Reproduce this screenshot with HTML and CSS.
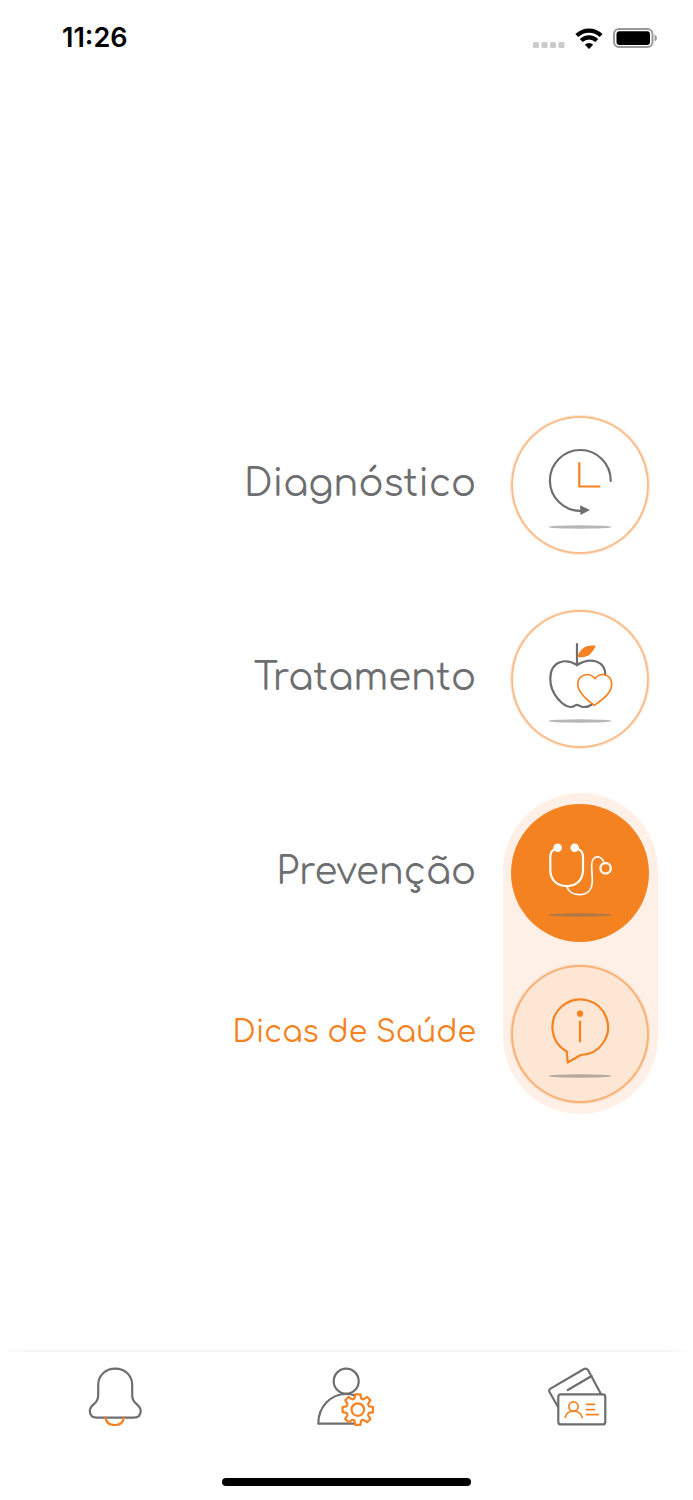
FILE: index.html
```html
<!DOCTYPE html>
<html lang="pt">
<head>
<meta charset="utf-8">
<meta name="viewport" content="width=device-width, initial-scale=1">
<title>Saúde</title>
<link rel="stylesheet" href="styles.css">
</head>
<body>
<div class="screen">
  <header class="status">
    <time class="clock">11:26</time>
    <div class="indicators">
      <svg class="signal" viewBox="0 0 32 6" aria-hidden="true"><rect width="6" height="6" rx="1.5"/><rect x="8.5" width="6" height="6" rx="1.5"/><rect x="17" width="6" height="6" rx="1.5"/><rect x="25.5" width="6" height="6" rx="1.5"/></svg>
      <svg class="wifi" viewBox="0 0 26 20" aria-hidden="true"><path d="M1.4 7.200a16.600 16.600 0 0 1 23.200 0M5.600 12a10.500 10.500 0 0 1 14.800 0"/><path class="wifi-dot" d="M13 20l-4-4a5.600 5.600 0 0 1 8 0z"/></svg>
      <svg class="battery" viewBox="0 0 44 20" aria-hidden="true"><rect class="shell" x="1" y="1" width="38.500" height="18" rx="5"/><rect x="3.500" y="3.200" width="33.500" height="13.800" rx="3"/><path class="nub" d="M41.500 6.500q2.500 1 2.500 3.500t-2.500 3.500z"/></svg>
    </div>
  </header>

  <main class="menu">
    <button class="item" type="button">
      <span class="label">Diagnóstico</span>
      <span class="disc">
        <svg viewBox="0 0 138 138" aria-hidden="true">
          <path class="gray" d="M99.700 65A30.400 30.400 0 1 0 70 94.800"/>
          <path class="gray-fill" d="M69 89.300L79 94l-9.500 5z"/>
          <path class="orange" d="M68.300 47v23.500h20.200"/>
          <ellipse class="shade" cx="69" cy="111" rx="31.500" ry="1.700"/>
        </svg>
      </span>
    </button>
    <button class="item" type="button">
      <span class="label">Tratamento</span>
      <span class="disc">
        <svg viewBox="0 0 138 138" aria-hidden="true">
          <path class="gray" d="M66 34v21.500M94.300 65C94.300 51 79.500 46.500 66 55C56 48.500 39.300 49.500 39.300 69C39.300 85 53 97 60 97C63.500 97 64 94.800 66 94.800C68 94.800 69 97 73 97Q77.500 97 81 94.500"/>
          <path class="orange-fill" d="M66.300 47C69.500 38 75 34.300 84.800 35.700C80.500 44.500 76.500 48.300 66.300 47z"/>
          <path class="orange thin" d="M84 68.700C78.500 61.500 66.800 64 66.800 74.500C66.800 82 74 88.500 83.300 95.300C93 88.500 100.700 82.500 100.700 74.500C100.700 64 89.500 61.500 84 68.700z"/>
          <ellipse class="shade" cx="69" cy="111" rx="31.500" ry="1.700"/>
        </svg>
      </span>
    </button>

    <div class="group">
      <div class="pill"></div>
      <div class="group-items">
        <button class="item" type="button" aria-expanded="true">
          <span class="label">Prevenção</span>
          <span class="disc disc-active">
            <svg viewBox="0 0 138 138" aria-hidden="true">
              <circle class="white-fill" cx="46.700" cy="43.700" r="4.300"/>
              <circle class="white-fill" cx="63.700" cy="43.700" r="4.300"/>
              <path class="white" d="M44 45Q39.300 47 39.300 53V66C39.300 76 46 82 55.700 82S72 76 72 66V53Q72 47 67 45"/>
              <path class="white thin" d="M55.700 82C57 87.500 62 90.700 68 90.700C77 90.700 81.300 85 81.300 77C81.300 71 80.700 67 80.700 61C80.700 50 92 51 93 59.300"/>
              <circle class="white" cx="94.600" cy="64.300" r="5.200"/>
              <ellipse class="shade" cx="69" cy="111" rx="31.500" ry="1.700"/>
            </svg>
          </span>
        </button>
        <button class="item item-sub" type="button">
          <span class="label">Dicas de Saúde</span>
          <span class="disc disc-sub">
            <svg viewBox="0 0 138 138" aria-hidden="true">
              <path class="orange" d="M55.700 86.500A27.800 27.800 0 1 1 69.700 90L56.700 97.500z"/>
              <circle class="orange-fill" cx="69" cy="48.700" r="3.100"/>
              <path class="orange" d="M69 56.500v20"/>
              <ellipse class="shade" cx="69" cy="111" rx="31.500" ry="1.700"/>
            </svg>
          </span>
        </button>
      </div>
    </div>
  </main>

  <nav class="tabs">
    <button class="tab" type="button" aria-label="Notificações">
      <svg viewBox="1 0 60 60" aria-hidden="true">
        <path class="gray" d="M30.200 2.700C20.500 2.700 13.200 9.500 13.200 19V29Q13.200 34 10 37C7 39.500 4.800 41 4.800 45Q4.800 51.600 12 51.600H48.500Q55.700 51.600 55.700 45C55.700 41 53.500 39.500 50.500 37Q47.200 34 47.200 29V19C47.200 9.500 40 2.700 30.200 2.700z"/>
        <path class="orange" d="M20.700 51.600Q21.200 59 29.700 59T38.700 51.600"/>
      </svg>
    </button>
    <button class="tab" type="button" aria-label="Perfil">
      <svg viewBox="1 0 60 60" aria-hidden="true">
        <circle class="gray" cx="30.200" cy="15.200" r="12.500"/>
        <path class="gray" d="M38.500 29.300Q34.500 28 30.200 28C14.500 28 2.300 41 2.300 57.700H38.500"/>
        <g transform="translate(41.800 43.600)">
          <path class="orange" d="M-3.300-11.300L-2.600-15.200H2.600L3.300-11.300Q4.500-9.800 6-10.500L9.400-12.600L12.600-9.400L10.500-6Q9.800-4.500 11.300-3.300L15.200-2.600V2.600L11.300 3.300Q9.800 4.500 10.500 6L12.600 9.400L9.400 12.600L6 10.500Q4.500 9.800 3.300 11.300L2.600 15.200H-2.600L-3.300 11.300Q-4.500 9.800-6 10.500L-9.400 12.600L-12.600 9.400L-10.500 6Q-9.800 4.500-11.300 3.300L-15.200 2.600V-2.600L-11.300-3.300Q-9.800-4.500-10.500-6L-12.600-9.400L-9.400-12.600L-6-10.500Q-4.500-9.800-3.300-11.300z"/>
          <circle class="orange" r="6.300"/>
        </g>
      </svg>
    </button>
    <button class="tab" type="button" aria-label="Cartões">
      <svg viewBox="1 0 60 60" aria-hidden="true">
        <rect class="gray" x="11.300" y="28.400" width="47" height="30" rx="2.500"/>
        <path class="gray" d="M10.800 40.500L2.500 26Q1.500 24 3.500 22.600L37 3Q39.500 1.700 41 4L53.700 27.500M20.800 24L44.600 10"/>
        <circle class="orange thin" cx="26.500" cy="40.600" r="4.700"/>
        <path class="orange thin" d="M18.200 51.500C19.500 43 33.500 43 35.200 51.500M39.500 38.300h8M39.500 43.600h8M39.500 48.700h11.700"/>
      </svg>
    </button>
  </nav>
  <footer class="home"><div class="home-bar"></div></footer>
</div>
</body>
</html>
```
FILE: styles.css
```css
* { box-sizing: border-box; }

body {
  margin: 0;
  background: #fff;
  font-family: Comfortaa, Quicksand, Lato, sans-serif;
  color: #6d6e70;
}

button {
  margin: 0;
  padding: 0;
  border: 0;
  background: none;
  font: inherit;
  color: inherit;
  cursor: pointer;
}

svg {
  display: block;
  fill: none;
  stroke-linecap: round;
  stroke-linejoin: round;
}

.screen {
  display: flex;
  flex-direction: column;
  min-height: 100vh;
}

.status {
  display: flex;
  align-items: center;
  justify-content: space-between;
  height: 76px;
  padding: 0 36px 0 62px;
}

.clock {
  font: 600 27px/32px Inter, sans-serif;
  color: #000;
}

.indicators {
  display: flex;
  align-items: center;
  gap: 10px;
}

.signal {
  width: 32px;
  height: 6px;
  margin-top: 13px;
  fill: #cbcbcb;
}

.wifi {
  width: 28px;
  height: 21px;
  stroke: #000;
  stroke-width: 4;
  stroke-linecap: butt;
}

.wifi-dot { fill: #000; stroke: none; }

.battery {
  width: 44px;
  height: 20px;
  fill: #000;
}

.shell { fill: none; stroke: #999; stroke-width: 2; }
.nub { fill: #999; }

.menu {
  flex: 1;
  display: flex;
  flex-direction: column;
  gap: 56px;
  padding: 340px 35px 48px 16px;
}

.item {
  display: flex;
  align-items: center;
  justify-content: flex-end;
  gap: 35px;
  width: 100%;
  padding-right: 9px;
  font-size: 37px;
  line-height: 48px;
}

.label { padding-bottom: 2px; }

.item-sub {
  font-size: 30px;
  color: #f58220;
}

.disc {
  flex: none;
  width: 138px;
  height: 138px;
  border-radius: 50%;
  box-shadow: inset 0 0 0 2px #fabd8a, 0 0 0 1px #fde9da;
}

.disc-active { background: #f58220; box-shadow: none; }
.disc-sub { background: #fde6d3; box-shadow: inset 0 0 0 2px #f8b176, 0 0 0 1px #fcdcc2; }

.group {
  display: grid;
  margin-top: -11px;
}

.pill,
.group-items { grid-area: 1 / 1; }

.pill {
  justify-self: end;
  width: 155px;
  border-radius: 78px;
  background: #fef0e6;
}

.group-items {
  display: flex;
  flex-direction: column;
  gap: 23px;
  padding: 11px 0;
}

.gray { stroke: #6d6e70; stroke-width: 2.2; }
.gray-fill { fill: #6d6e70; }
.orange { stroke: #f58220; stroke-width: 2.2; }
.orange-fill { fill: #f58220; }
.white { stroke: #fff; stroke-width: 2.2; }
.white-fill { fill: #fff; }
.thin { stroke-width: 1.7; }
.shade { fill: #6d6e70; opacity: 0.5; }

.tabs {
  display: grid;
  grid-template-columns: repeat(3, 1fr);
  padding: 16px 0 26px;
  background: linear-gradient(90deg, #fff, #f5f5f5 4%, #f5f5f5 96%, #fff) top / 100% 2px no-repeat;
}

.tab {
  display: flex;
  justify-content: center;
}

.tab svg { width: 60px; height: 60px; }

.home {
  display: flex;
  justify-content: center;
  padding: 26px 0 14px;
}

.home-bar {
  width: 36%;
  height: 8px;
  border-radius: 4px;
  background: #000;
}
```
